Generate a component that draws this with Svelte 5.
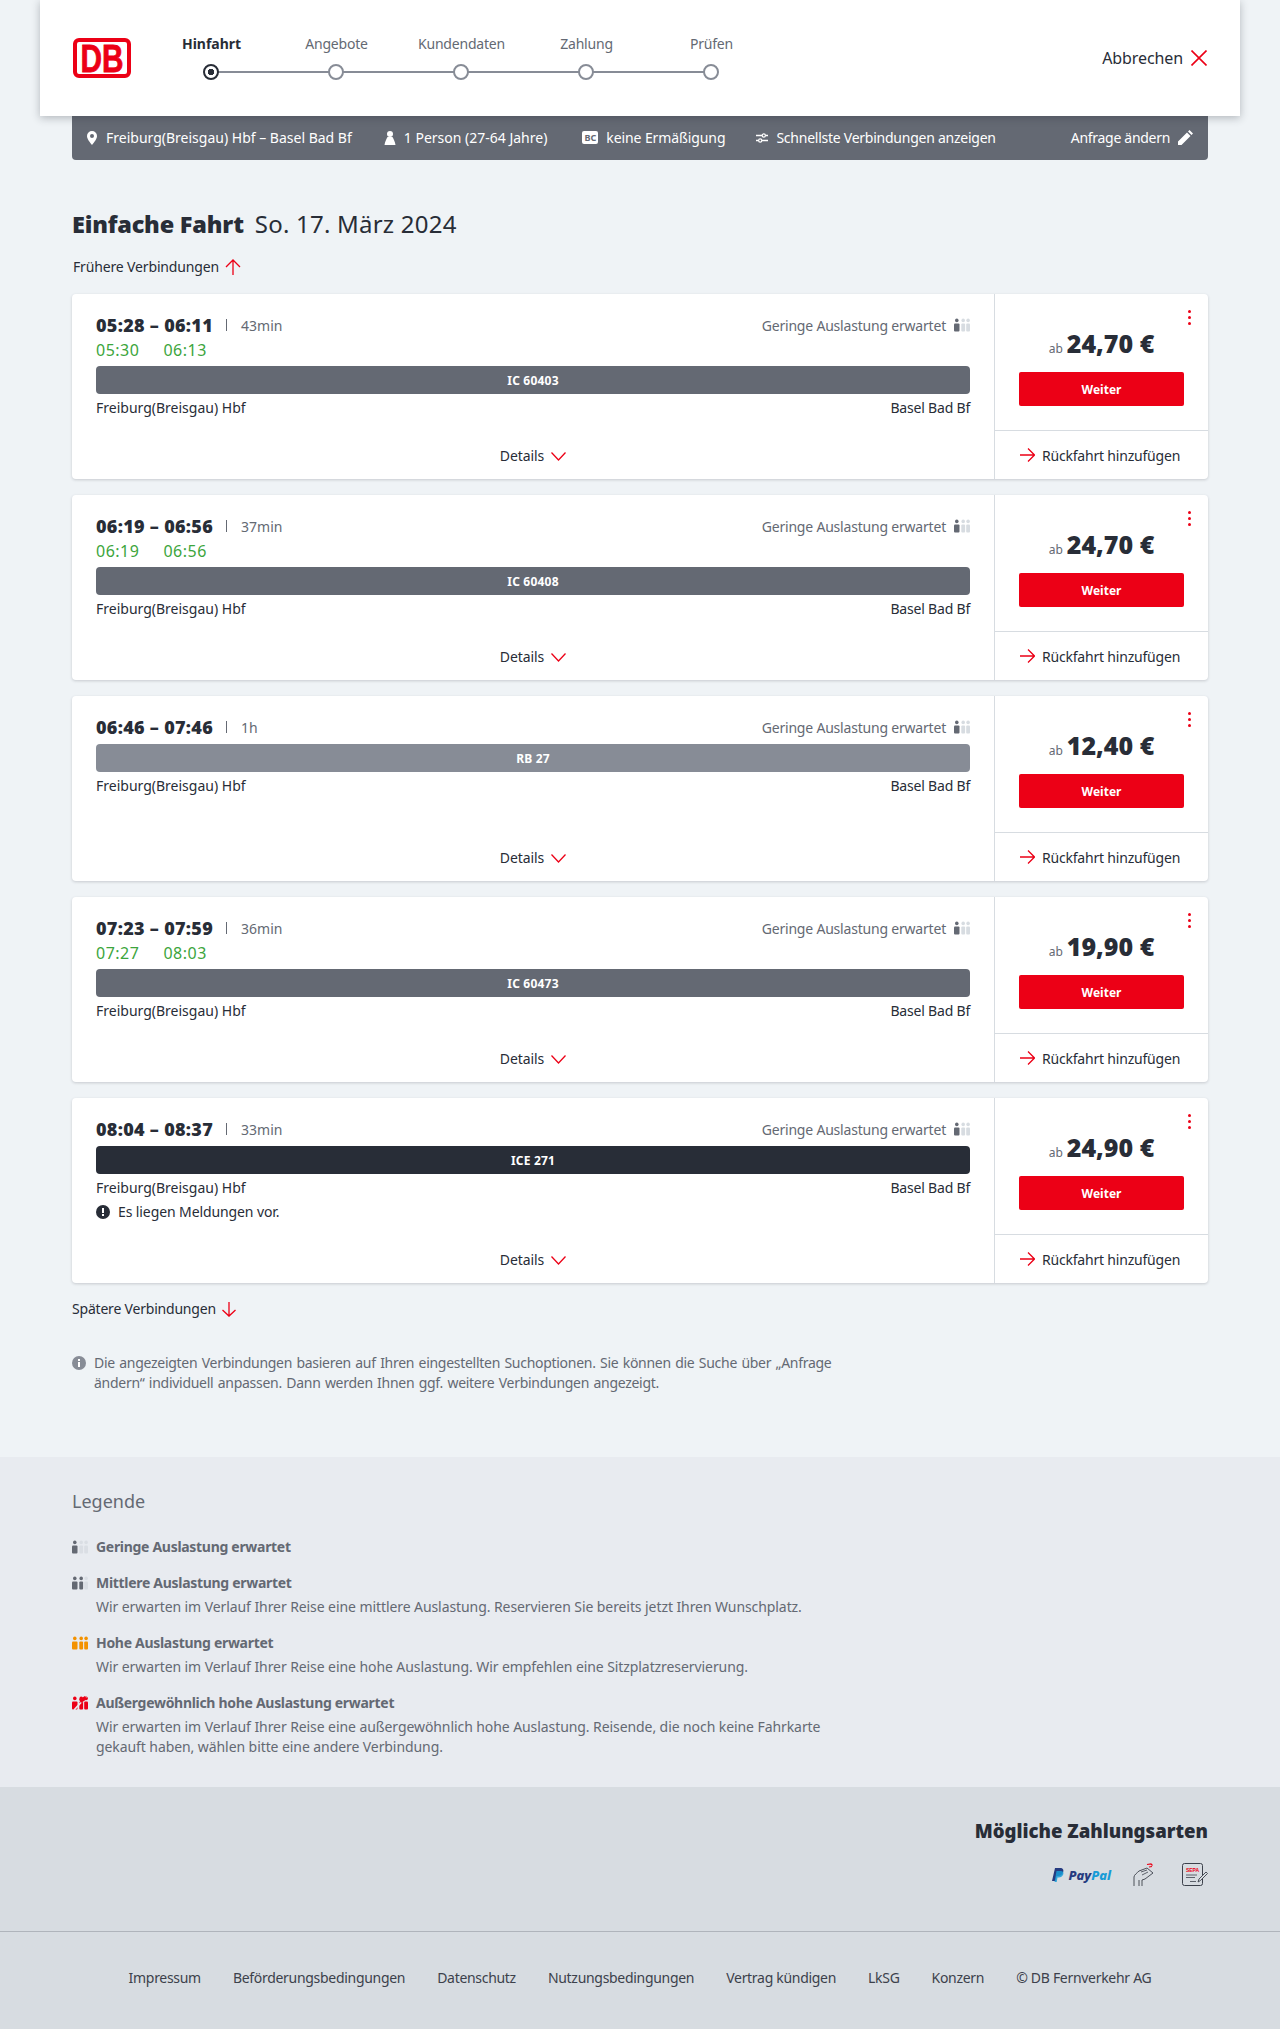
<script>
  const steps = ['Hinfahrt', 'Angebote', 'Kundendaten', 'Zahlung', 'Prüfen'];
  const trips = [
    { time: '05:28 – 06:11', dur: '43min', d1: '05:30', d2: '06:13', train: 'IC 60403', cls: 'ic', price: '24,70 €' },
    { time: '06:19 – 06:56', dur: '37min', d1: '06:19', d2: '06:56', train: 'IC 60408', cls: 'ic', price: '24,70 €' },
    { time: '06:46 – 07:46', dur: '1h', train: 'RB 27', cls: 'rb', price: '12,40 €' },
    { time: '07:23 – 07:59', dur: '36min', d1: '07:27', d2: '08:03', train: 'IC 60473', cls: 'ic', price: '19,90 €' },
    { time: '08:04 – 08:37', dur: '33min', train: 'ICE 271', cls: 'ice', price: '24,90 €', msg: 'Es liegen Meldungen vor.' }
  ];
  const legend = [
    { level: 1, color: '#646973', title: 'Geringe Auslastung erwartet' },
    { level: 2, color: '#646973', title: 'Mittlere Auslastung erwartet', text: 'Wir erwarten im Verlauf Ihrer Reise eine mittlere Auslastung. Reservieren Sie bereits jetzt Ihren Wunschplatz.' },
    { level: 3, color: '#f39200', title: 'Hohe Auslastung erwartet', text: 'Wir erwarten im Verlauf Ihrer Reise eine hohe Auslastung. Wir empfehlen eine Sitzplatzreservierung.' },
    { level: 4, color: '#ec0016', title: 'Außergewöhnlich hohe Auslastung erwartet', text: 'Wir erwarten im Verlauf Ihrer Reise eine außergewöhnlich hohe Auslastung. Reisende, die noch keine Fahrkarte gekauft haben, wählen bitte eine andere Verbindung.' }
  ];
  const links = ['Impressum', 'Beförderungsbedingungen', 'Datenschutz', 'Nutzungsbedingungen', 'Vertrag kündigen', 'LkSG', 'Konzern', '© DB Fernverkehr AG'];
  const figs = [
    { cx: 2.8, x: 0, w: 5.5 },
    { cx: 9.2, x: 7.3, w: 3.8 },
    { cx: 14.1, x: 12.2, w: 3.8 }
  ];
</script>

{#snippet load(level, color, off)}
  <svg class="load" width="16" height="14" viewBox="0 0 16 14">
    {#each figs as f, i}
      {@const fill = (level === 4 ? true : i < level) ? color : off}
      <circle cx={f.cx} cy="2.400" r="1.800" {fill} />
      <rect x={f.x} y="5.500" width={f.w} height="8" rx="1" {fill} />
    {/each}
    {#if level === 4}
      <path d="M2 14 L14 1" stroke="#e8ebf0" stroke-width="1.800" />
      <path d="M7 3.500 L13 0 L15 3 L9 7Z" fill={color} />
    {/if}
  </svg>
{/snippet}

<div class="page">
  <header class="head">
    <svg class="logo" width="58" height="40" viewBox="0 0 58 40">
      <rect x="2" y="2" width="54" height="36" rx="4" fill="#fff" stroke="#ec0016" stroke-width="4" />
      <text x="7.500" y="33.500" textLength="43" lengthAdjust="spacingAndGlyphs" class="logotext">DB</text>
    </svg>
    <ol class="steps">
      {#each steps as s, i}
        <li class="step" class:active={i === 0}>
          <span class="steplabel">{s}</span>
          <span class="dot"></span>
        </li>
      {/each}
    </ol>
    <div class="cancel">
      <span>Abbrechen</span>
      <svg width="16" height="16" viewBox="0 0 16 16"><path d="M0.500 0.500 L15.500 15.500 M15.500 0.500 L0.500 15.500" stroke="#ec0016" stroke-width="1.600" fill="none" /></svg>
    </div>
  </header>

  <main class="main">
    <div class="subbar">
      <span class="si first">
        <svg width="10" height="14" viewBox="0 0 10 14"><path fill-rule="evenodd" d="M5 0a5 5 0 0 1 5 5c0 3-3 6.500-5 9-2-2.500-5-6-5-9a5 5 0 0 1 5-5Zm0 3a2 2 0 1 0 0 4 2 2 0 0 0 0-4Z" fill="#fff" /></svg>
        Freiburg(Breisgau) Hbf – Basel Bad Bf
      </span>
      <span class="si person">
        <svg width="12" height="14" viewBox="0 0 12 14"><circle cx="6" cy="3" r="3" fill="#fff" /><path d="M3.500 6h5c1 2 2.500 4.500 3 8H.5c.5-3.500 2-6 3-8Z" fill="#fff" /></svg>
        1 Person (27-64 Jahre)
      </span>
      <span class="si bc">
        <span class="bcicon">BC</span>
        keine Ermäßigung
      </span>
      <span class="si fast">
        <svg width="12" height="10" viewBox="0 0 12 10"><path d="M0 2.500h6M9.500 2.500H12M0 7.500h2.500M6 7.500h6" stroke="#fff" stroke-width="1.500" /><circle cx="7.800" cy="2.500" r="1.600" fill="none" stroke="#fff" stroke-width="1.200" /><circle cx="4.200" cy="7.500" r="1.600" fill="none" stroke="#fff" stroke-width="1.200" /></svg>
        Schnellste Verbindungen anzeigen
      </span>
      <span class="si change">
        Anfrage ändern
        <svg width="15" height="15" viewBox="0 0 15 15"><path d="M0 15v-3.500L9 2.500 12.500 6 3.500 15Z M10 1.500 11.500 0 15 3.500 13.500 5Z" fill="#fff" /></svg>
      </span>
    </div>

    <h1 class="title"><strong>Einfache Fahrt</strong><span>So. 17. März 2024</span></h1>

    <div class="more early">
      Frühere Verbindungen
      <svg width="16" height="16" viewBox="0 0 16 16"><path d="M1 8 L8 1 L15 8 M8 1 V16" stroke="#ec0016" stroke-width="1.300" fill="none" /></svg>
    </div>

    <div class="cards">
      {#each trips as t}
        <article class="card">
          <div class="left">
            <div class="top">
              <div class="topl">
                <span class="time">{t.time}</span>
                <span class="sep"></span>
                <span class="dur">{t.dur}</span>
              </div>
              <div class="lowload">
                Geringe Auslastung erwartet
                {@render load(1, '#646973', '#d7dce1')}
              </div>
            </div>
            {#if t.d1}
              <div class="delay"><span>{t.d1}</span><span>{t.d2}</span></div>
            {/if}
            <div class="bar {t.cls}">{t.train}</div>
            <div class="stations"><span>Freiburg(Breisgau) Hbf</span><span class="dest">Basel Bad Bf</span></div>
            {#if t.msg}
              <div class="msg">
                <svg width="14" height="14" viewBox="0 0 14 14"><circle cx="7" cy="7" r="7" fill="#282d37" /><rect x="6" y="3" width="2" height="5" fill="#fff" /><rect x="6" y="9" width="2" height="2" fill="#fff" /></svg>
                {t.msg}
              </div>
            {/if}
            <div class="details">
              Details
              <svg width="15" height="9" viewBox="0 0 15 9"><path d="M0.500 0.500 L7.500 8 L14.500 0.500" stroke="#ec0016" stroke-width="1.300" fill="none" /></svg>
            </div>
          </div>
          <div class="right">
            <div class="buy">
              <span class="kebab"><i></i><i></i><i></i></span>
              <div class="price"><small>ab</small><b>{t.price}</b></div>
              <div class="btn">Weiter</div>
            </div>
            <div class="back">
              <svg width="15" height="14" viewBox="0 0 15 14"><path d="M8 0.500 L14.500 7 L8 13.500 M14.500 7 H0" stroke="#ec0016" stroke-width="1.300" fill="none" /></svg>
              Rückfahrt hinzufügen
            </div>
          </div>
        </article>
      {/each}
    </div>

    <div class="more late">
      Spätere Verbindungen
      <svg width="14" height="15" viewBox="0 0 14 15"><path d="M0.500 8 L7 14 L13.500 8 M7 14 V0" stroke="#ec0016" stroke-width="1.300" fill="none" /></svg>
    </div>

    <div class="info">
      <svg width="14" height="14" viewBox="0 0 14 14"><circle cx="7" cy="7" r="7" fill="#878c96" /><rect x="6" y="6" width="2" height="5" fill="#fff" /><rect x="6" y="3" width="2" height="2" fill="#fff" /></svg>
      <p>Die angezeigten Verbindungen basieren auf Ihren eingestellten Suchoptionen. Sie können die Suche über „Anfrage ändern“ individuell anpassen. Dann werden Ihnen ggf. weitere Verbindungen angezeigt.</p>
    </div>
  </main>

  <section class="legend">
    <h2>Legende</h2>
    {#each legend as l}
      <div class="litem">
        <div class="ltitle">
          {@render load(l.level, l.color, '#dadee4')}
          <b>{l.title}</b>
        </div>
        {#if l.text}<p>{l.text}</p>{/if}
      </div>
    {/each}
  </section>

  <section class="pay">
    <h3>Mögliche Zahlungsarten</h3>
    <div class="payicons">
      <span class="paypal">
        <svg width="12" height="14" viewBox="0 0 12 14"><path d="M3 0h5c3 0 4 2 3 4.500C10 7 8 8 6 8H4.500L3.500 13H0Z" fill="#253b80" /><path d="M4.500 3h4c2.500 0 3.500 1.500 2.700 3.500-.8 2-2.500 3-4.500 3H5.500L4.700 14H2.500Z" fill="#179bd7" opacity=".85" /></svg>
        <span class="pp1">Pay</span><span class="pp2">Pal</span>
      </span>
      <svg class="hand" width="22" height="24" viewBox="0 0 22 24" fill="none">
        <path d="M1 23V14c0-2 3-4 5-6l8-3 6 5-8 6-3 1v6M6 23v-6" stroke="#3c414b" stroke-width=".9" />
        <path d="M8 9l6-2M9 12l6-3" stroke="#3c414b" stroke-width=".8" />
        <path d="M14 1.500l4-.5 1.500 1.500M16 4l3-.5" stroke="#ec0016" stroke-width="1.200" />
      </svg>
      <svg class="sepa" width="26" height="24" viewBox="0 0 26 24" fill="none">
        <rect x=".5" y=".5" width="20" height="22" rx="2" stroke="#3c414b" stroke-width="1" />
        <text x="10.500" y="9" text-anchor="middle" class="sepatext">SEPA</text>
        <path d="M4 12h11M4 14.500h9M8 18.500h6" stroke="#3c414b" stroke-width=".8" />
        <path d="M16 19l1-3 7-7 1.500 1.500-7 7Z" fill="#d7dce1" stroke="#3c414b" stroke-width=".9" />
      </svg>
    </div>
  </section>

  <footer class="foot">
    {#each links as l}<span>{l}</span>{/each}
  </footer>
</div>

<style>
  :global(body) { margin: 0; background: #eff3f6; }
  .page { font-family: "Noto Sans", "Open Sans", sans-serif; font-size: 14px; color: #282d37; width: 1280px; height: 2029px; overflow: hidden; display: flex; flex-direction: column; }
  .head { position: relative; z-index: 2; margin: 0 40px; height: 116px; background: #fff; box-shadow: 0 2px 8px rgba(40,45,55,.3); display: flex; align-items: center; padding: 0 33px; box-sizing: border-box; }
  .logo { flex: none; overflow: visible; }
  .logotext { font: 700 38px "Liberation Sans", sans-serif; fill: #ec0016; stroke: #ec0016; stroke-width: .8px; }
  .steps { list-style: none; margin: 0 0 0 18px; padding: 0; display: flex; }
  .step { width: 125px; display: flex; flex-direction: column; align-items: center; position: relative; height: 64px; }
  .steplabel { font-size: 14px; line-height: 20px; color: #646973; white-space: nowrap; margin-top: 8px; letter-spacing: -.2px; }
  .active .steplabel { color: #282d37; font-weight: 700; letter-spacing: -.05px; }
  .dot { position: absolute; top: 38px; left: 54px; width: 16px; height: 16px; box-sizing: border-box; border: 2px solid #878c96; border-radius: 50%; background: #fff; z-index: 1; }
  .active .dot { border-color: #282d37; background: radial-gradient(circle, #282d37 0 3px, #fff 3.500px); }
  .step:not(:last-child)::after { content: ""; position: absolute; left: 61px; width: 125px; top: 45px; height: 2px; background: #878c96; }
  .cancel { margin-left: auto; display: flex; align-items: center; gap: 8px; font-size: 16px; letter-spacing: -.1px; }
  .main { padding: 0 72px; flex: none; height: 1341px; }
  .subbar { height: 44px; background: #646973; border-radius: 0 0 4px 4px; color: #fff; display: flex; align-items: center; position: relative; }
  .si { display: flex; align-items: center; gap: 8px; white-space: nowrap; line-height: 20px; margin-top: -1px; }
  .first { margin-left: 15px; gap: 9px; }
  .person { margin-left: 32px; }
  .bc { margin-left: 35px; gap: 8px; letter-spacing: -.1px; }
  .fast { margin-left: 31px; letter-spacing: -.25px; }
  .change { margin-left: auto; margin-right: 15px; letter-spacing: -.3px; }
  .bcicon { background: #fff; color: #646973; font-size: 9px; font-weight: 700; width: 16px; height: 13px; line-height: 13px; border-radius: 2px; text-align: center; }
  .title { margin: 48px 0 0; font-size: 24px; font-weight: 400; line-height: 32px; display: flex; gap: 11px; letter-spacing: .22px; }
  .title strong { font-weight: 900; font-size: 23.500px; letter-spacing: -.2px; }
  .more { display: flex; align-items: center; gap: 6px; line-height: 20px; letter-spacing: -.15px; }
  .early { margin-top: 17px; margin-left: 1px; }
  .cards { margin-top: 17px; display: flex; flex-direction: column; gap: 16px; }
  .card { height: 185px; background: #fff; border-radius: 4px; box-shadow: 0 1px 3px rgba(40,45,55,.2); display: flex; box-sizing: border-box; }
  .left { width: 922px; flex: none; padding: 20px 24px 0; box-sizing: border-box; position: relative; }
  .top { display: flex; justify-content: space-between; align-items: center; height: 24px; padding-bottom: 2px; box-sizing: border-box; }
  .topl { display: flex; align-items: center; }
  .time { font-size: 18px; font-weight: 900; letter-spacing: .3px; }
  .sep { width: 1px; height: 12px; background: #646973; margin: 0 14px 0 13px; }
  .dur { color: #646973; }
  .lowload { display: flex; align-items: center; gap: 8px; color: #646973; letter-spacing: -.2px; }
  .delay { color: #3ca53c; font-size: 16px; line-height: 24px; display: flex; gap: 24px; letter-spacing: .5px; }
  .bar { height: 28px; margin-top: 4px; border-radius: 4px; color: #fff; font-size: 12px; font-weight: 700; letter-spacing: .2px; display: flex; align-items: center; justify-content: center; }
  .ic { background: #646973; }
  .rb { background: #878c96; }
  .ice { background: #282d37; }
  .stations { display: flex; justify-content: space-between; line-height: 20px; margin-top: 4px; }
  .dest { letter-spacing: -.2px; }
  .msg { display: flex; align-items: center; gap: 8px; line-height: 20px; margin-top: 4px; letter-spacing: -.1px; }
  .details { position: absolute; left: 0; right: 0; bottom: 13px; display: flex; justify-content: center; align-items: center; gap: 7px; line-height: 20px; letter-spacing: -.1px; }
  .right { flex: 1; border-left: 1px solid #d7dce1; display: flex; flex-direction: column; }
  .buy { height: 137px; border-bottom: 1px solid #d7dce1; box-sizing: border-box; position: relative; display: flex; flex-direction: column; align-items: center; padding-top: 34px; }
  .kebab { position: absolute; right: 17px; top: 16px; display: flex; flex-direction: column; gap: 3px; }
  .kebab i { width: 3px; height: 3px; border-radius: 50%; background: #ec0016; }
  .price { display: flex; align-items: baseline; gap: 4px; line-height: 30px; }
  .price small { font-size: 12px; color: #646973; }
  .price b { font-size: 25px; font-weight: 900; }
  .btn { margin-top: 8px; width: 165px; height: 34px; background: #ec0016; color: #fff; font-size: 12px; font-weight: 700; border-radius: 2px; display: flex; align-items: center; justify-content: center; }
  .back { flex: 1; display: flex; align-items: center; gap: 7px; padding-left: 25px; letter-spacing: -.2px; }
  .late { margin-top: 16px; letter-spacing: -.2px; }
  .info { margin-top: 34px; display: flex; gap: 8px; width: 770px; color: #646973; }
  .info svg { flex: none; margin-top: 3px; }
  .info p { margin: 0; line-height: 20px; letter-spacing: -.28px; word-spacing: 1px; }
  .legend { background: #e8ebf0; height: 330px; padding: 32px 72px 0; box-sizing: border-box; color: #646973; flex: none; }
  .legend h2 { margin: 0 0 24px; font-size: 18px; font-weight: 400; line-height: 24px; }
  .litem { margin-bottom: 16px; }
  .ltitle { display: flex; align-items: center; gap: 8px; line-height: 20px; letter-spacing: -.3px; }
  .litem p { margin: 0 0 0 24px; width: 760px; line-height: 20px; padding-top: 4px; letter-spacing: -.08px; }
  .pay { background: #d7dce1; height: 145px; flex: none; padding: 30px 72px 0; box-sizing: border-box; border-bottom: 1px solid #afb4bb; text-align: right; }
  .pay h3 { margin: 0; font-size: 18.600px; font-weight: 900; line-height: 28px; }
  .payicons { display: flex; justify-content: flex-end; align-items: center; margin-top: 16px; height: 28px; }
  .hand { margin-left: 22px; }
  .sepa { margin-left: 27px; }
  .paypal { display: flex; align-items: center; gap: 4px; font-style: italic; font-weight: 800; font-size: 13px; }
  .pp1 { color: #253b80; margin-right: -4px; }
  .pp2 { color: #179bd7; }
  .sepatext { font: 700 5px "Liberation Sans", sans-serif; fill: #ec0016; }
  .foot { flex: 1; background: #d7dce1; display: flex; justify-content: center; align-items: center; gap: 32px; color: #3c414b; letter-spacing: -.3px; padding-bottom: 6px; }
</style>
